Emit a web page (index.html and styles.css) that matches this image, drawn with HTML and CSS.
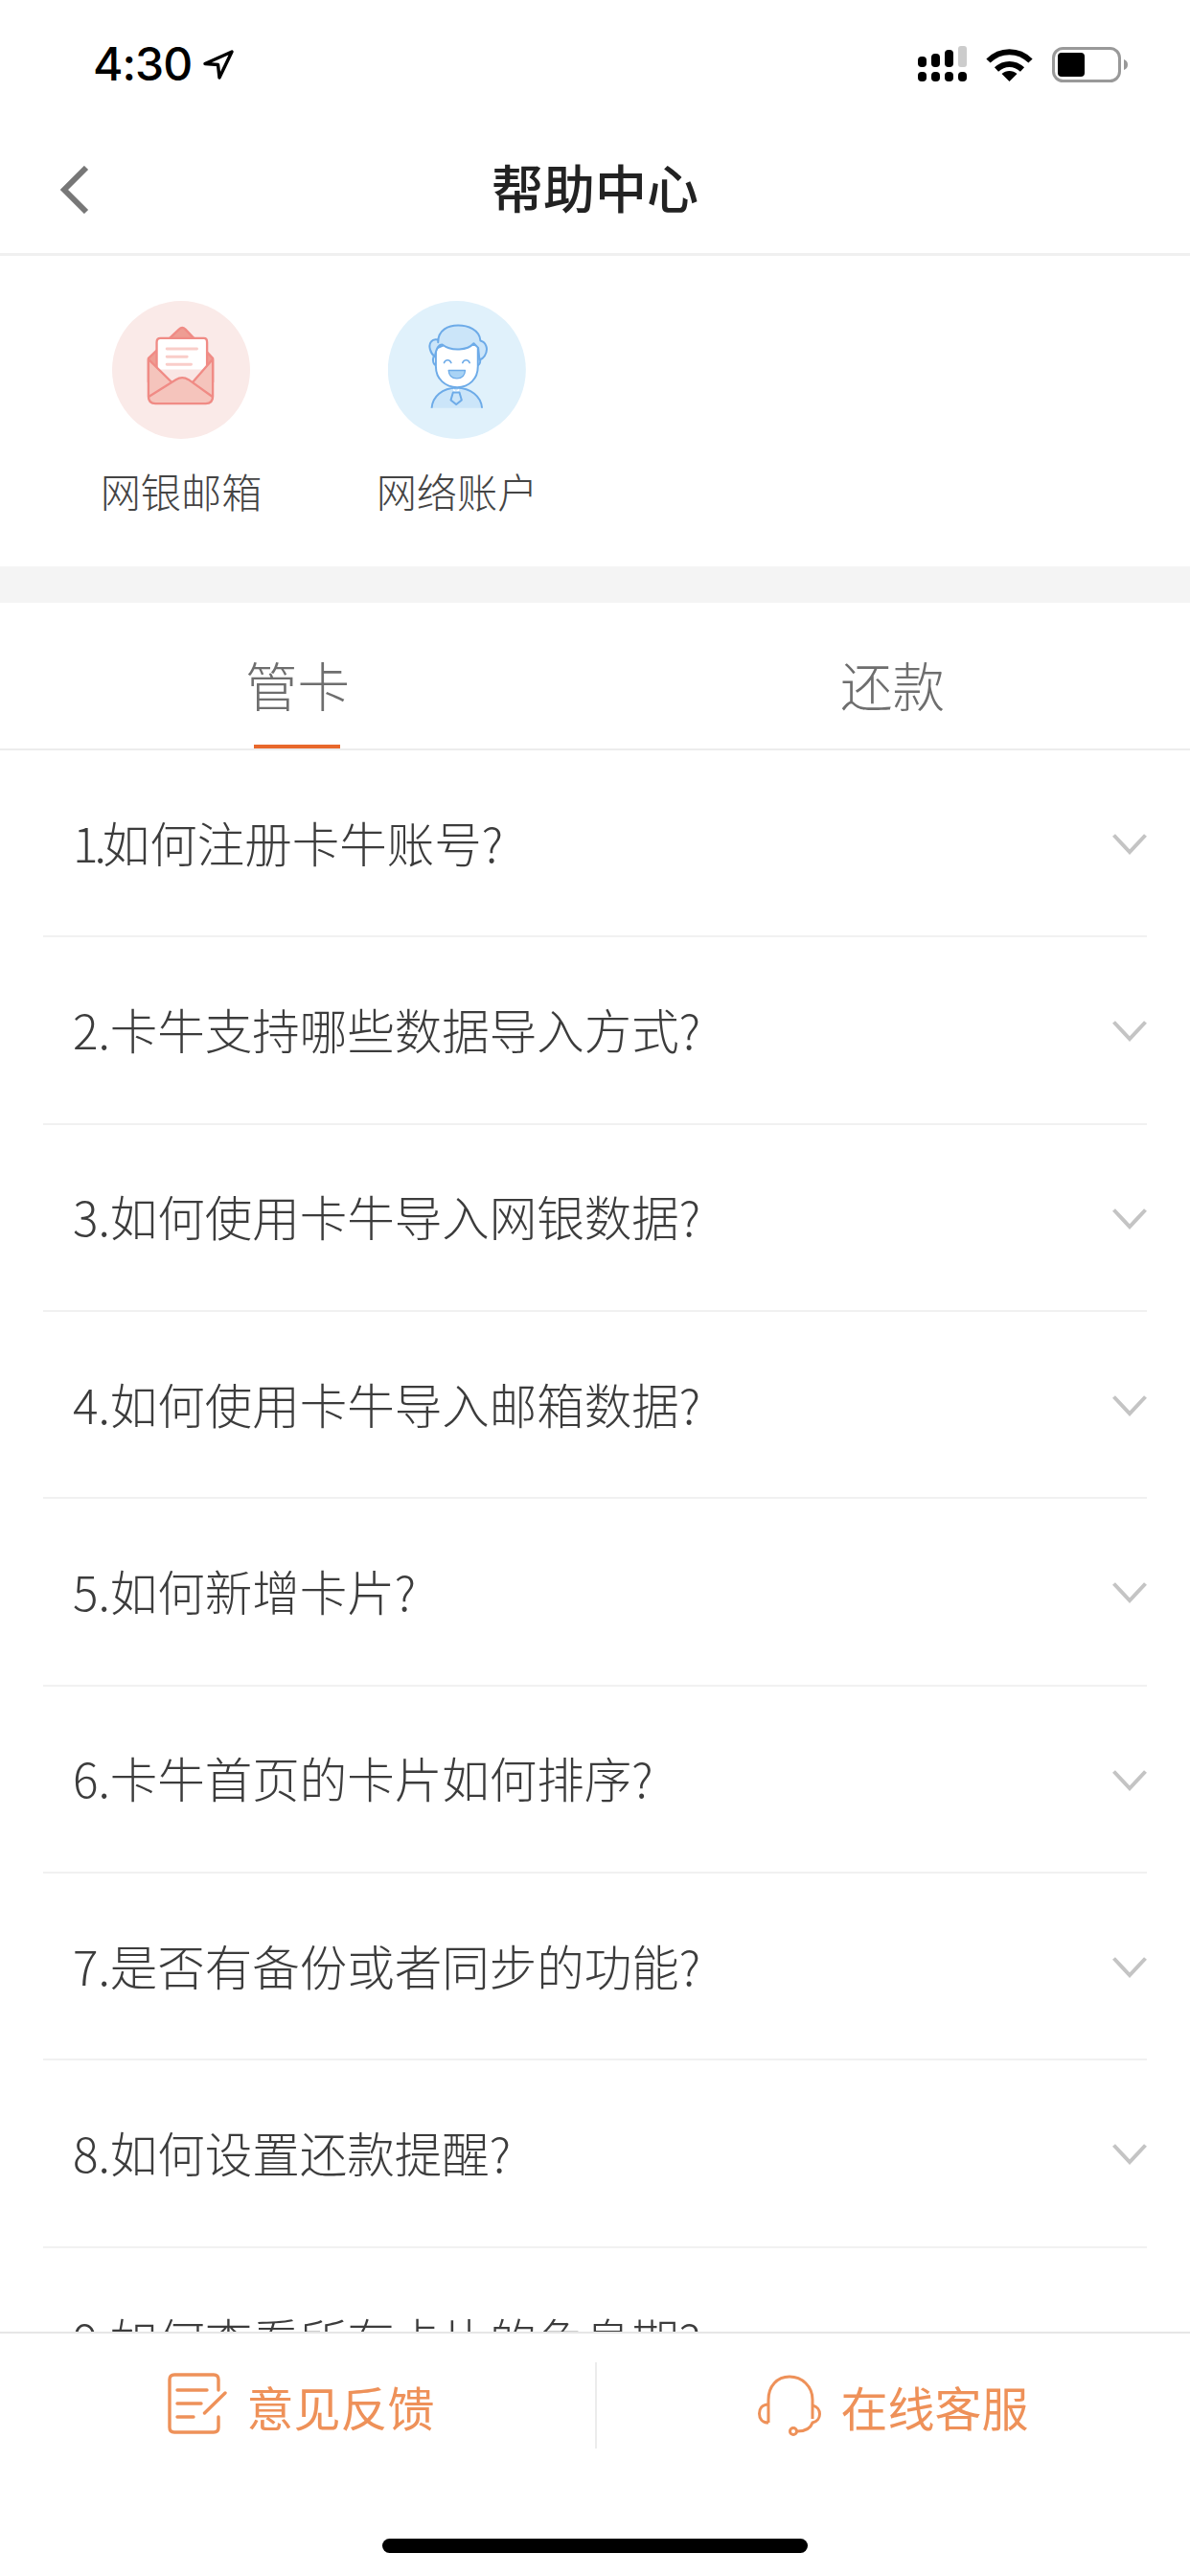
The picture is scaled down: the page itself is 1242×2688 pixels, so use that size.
FILE: index.html
```html
<!DOCTYPE html>
<html lang="zh-CN">
<head>
<meta charset="utf-8">
<title>帮助中心</title>
<link rel="stylesheet" href="styles.css">
</head>
<body>
<div class="page">
  <div class="status">
    <div class="status-left">
      <span class="time">4:30</span>
      <svg class="loc" viewBox="0 0 32 31"><path d="M2 14.500 30 2 17 29 15.500 15.500Z" fill="none" stroke="#000" stroke-width="3.400" stroke-linejoin="round"/></svg>
    </div>
    <div class="status-right">
      <svg class="signal" viewBox="0 0 51 37">
        <rect x="0" y="11" width="9" height="11" rx="4"/><rect x="14" y="8" width="9" height="14" rx="4"/><rect x="28" y="4" width="9" height="18" rx="4"/><rect x="42" y="0" width="9" height="22" rx="3" fill="#ccc"/>
        <rect x="0" y="27" width="9" height="10" rx="4"/><rect x="14" y="27" width="9" height="10" rx="4"/><rect x="28" y="27" width="9" height="10" rx="4"/><rect x="42" y="27" width="9" height="10" rx="4"/>
      </svg>
      <svg class="wifi" viewBox="0 0 49 36">
        <path d="M2.500 14.500C15 2 34 2 46.500 14.500" fill="none" stroke="#000" stroke-width="6"/>
        <path d="M11 23.500C19 16 30 16 38 23.500" fill="none" stroke="#000" stroke-width="6"/>
        <path d="M24.500 36 16.500 28C21 24 28 24 32.500 28Z"/>
      </svg>
      <svg class="battery" viewBox="0 0 79 37">
        <rect x="1.500" y="1.500" width="69" height="34" rx="10" fill="none" stroke="#999" stroke-width="3"/>
        <rect x="6" y="6" width="28" height="25" rx="4"/>
        <path d="M75 13C78 14 79 16 79 18.500S78 23 75 24Z" fill="#999"/>
      </svg>
    </div>
  </div>

  <header class="nav">
    <svg class="back" viewBox="0 0 30 50"><path d="M27 2 4 25 27 48" fill="none" stroke="#777" stroke-width="6"/></svg>
    <h1 class="title">帮助中心</h1>
  </header>

  <section class="shortcuts">
    <div class="shortcut">
      <svg class="shortcut-icon" viewBox="110 75 433 433">
        <circle cx="326.500" cy="291.500" r="216.500" fill="#faeae8"/>
        <path d="M224 255 320 164Q330 154 340 164L426 255V330H224Z" fill="#ee9d93" stroke="#f08b85" stroke-width="7" stroke-linejoin="round"/>
        <path d="M250 205Q250 192 262 192H398Q408 192 408 205V340H250Z" fill="#fff" stroke="#f08b85" stroke-width="7"/>
        <path d="M250 290V322L300 350H360L408 318V290" fill="#f9e6e4"/>
        <path d="M282 225H376M282 250H345M282 274H358" stroke="#f9cdc9" stroke-width="9" stroke-linecap="round" fill="none"/>
        <path d="M224 258 312 345H350L426 258V375Q426 397 404 397H246Q224 397 224 375Z" fill="#f5c4bc" stroke="#f08b85" stroke-width="7" stroke-linejoin="round"/>
        <path d="M226 375 310 322Q330 310 350 322L424 375" fill="#f5c4bc"/>
        <path d="M226 375 310 322Q330 310 350 322L424 375" fill="none" stroke="#f08b85" stroke-width="7" stroke-linecap="round"/>
      </svg>
      <span class="shortcut-label">网银邮箱</span>
    </div>
    <div class="shortcut">
      <svg class="shortcut-icon" viewBox="105 75 433 433">
        <circle cx="321" cy="291.500" r="216.500" fill="#e0f1fb"/>
        <path d="M242 411C245 375 275 348 320 348S397 375 400 411Z" fill="#cbe5f9"/>
        <path d="M242 411C245 375 275 348 320 348S397 375 400 411" fill="none" stroke="#6dabe8" stroke-width="6"/>
        <path d="M310 350 318 358 328 350 328 358 318 366 310 358Z" fill="#fff"/>
        <path d="M309 362H329L336 386 319 400 302 386Z" fill="#cbe5f9" stroke="#6dabe8" stroke-width="6" stroke-linejoin="round"/>
        <path d="M248 250C243 262 248 276 256 277M392 250C398 262 393 276 386 277" fill="#fff" stroke="#6dabe8" stroke-width="6"/>
        <path d="M255 225V280C255 320 285 346 322 346S387 320 387 280V215L300 205Z" fill="#fff" stroke="#6dabe8" stroke-width="6"/>
        <path d="M262 205C262 165 295 152 325 152S392 165 395 200C412 205 422 225 408 248 403 256 398 258 392 260L388 222 374 208C355 230 305 235 275 212 262 212 255 230 252 250 238 240 230 215 240 203 246 195 255 195 262 197Z" fill="#cbe5f9" stroke="#6dabe8" stroke-width="6" stroke-linejoin="round"/>
        <path d="M281 269C286 258 298 258 303 269M339 269C344 258 356 258 361 269" fill="none" stroke="#6dabe8" stroke-width="5" stroke-linecap="round"/>
        <path d="M295 293H347C346 310 335 318 321 318S296 310 295 293Z" fill="#a9d3f5" stroke="#6dabe8" stroke-width="4" stroke-linejoin="round"/>
      </svg>
      <span class="shortcut-label">网络账户</span>
    </div>
  </section>

  <div class="band"></div>

  <nav class="tabs">
    <div class="tab tab-active">管卡</div>
    <div class="tab">还款</div>
  </nav>

  <div class="faq">
    <div class="faq-row"><span><span class="narrow-digit">1.</span>如何注册卡牛账号?</span><svg class="chev" viewBox="0 0 36 22"><path d="M1.500 1.500 18 19 34.500 1.500" fill="none" stroke="#c4c4c4" stroke-width="4"/></svg></div>
    <div class="faq-row"><span>2.卡牛支持哪些数据导入方式?</span><svg class="chev" viewBox="0 0 36 22"><path d="M1.500 1.500 18 19 34.500 1.500" fill="none" stroke="#c4c4c4" stroke-width="4"/></svg></div>
    <div class="faq-row"><span>3.如何使用卡牛导入网银数据?</span><svg class="chev" viewBox="0 0 36 22"><path d="M1.500 1.500 18 19 34.500 1.500" fill="none" stroke="#c4c4c4" stroke-width="4"/></svg></div>
    <div class="faq-row"><span>4.如何使用卡牛导入邮箱数据?</span><svg class="chev" viewBox="0 0 36 22"><path d="M1.500 1.500 18 19 34.500 1.500" fill="none" stroke="#c4c4c4" stroke-width="4"/></svg></div>
    <div class="faq-row"><span>5.如何新增卡片?</span><svg class="chev" viewBox="0 0 36 22"><path d="M1.500 1.500 18 19 34.500 1.500" fill="none" stroke="#c4c4c4" stroke-width="4"/></svg></div>
    <div class="faq-row"><span>6.卡牛首页的卡片如何排序?</span><svg class="chev" viewBox="0 0 36 22"><path d="M1.500 1.500 18 19 34.500 1.500" fill="none" stroke="#c4c4c4" stroke-width="4"/></svg></div>
    <div class="faq-row"><span>7.是否有备份或者同步的功能?</span><svg class="chev" viewBox="0 0 36 22"><path d="M1.500 1.500 18 19 34.500 1.500" fill="none" stroke="#c4c4c4" stroke-width="4"/></svg></div>
    <div class="faq-row"><span>8.如何设置还款提醒?</span><svg class="chev" viewBox="0 0 36 22"><path d="M1.500 1.500 18 19 34.500 1.500" fill="none" stroke="#c4c4c4" stroke-width="4"/></svg></div>
    <div class="faq-row"><span>9.如何查看所有卡片的免息期?</span><svg class="chev" viewBox="0 0 36 22"><path d="M1.500 1.500 18 19 34.500 1.500" fill="none" stroke="#c4c4c4" stroke-width="4"/></svg></div>
  </div>

  <footer class="footer">
    <div class="actions">
      <div class="action action-left">
        <svg class="action-note" viewBox="0 0 62 64" fill="none" stroke="#ee9159" stroke-width="3.400" stroke-linecap="round">
          <path d="M53 18V7Q53 2 48 2H7Q2 2 2 7V57Q2 62 7 62H48Q53 62 53 57V46"/>
          <path d="M10 18H41M10 32H35M10 46H27M60 21 38.500 42"/>
        </svg>
        <span>意见反馈</span>
      </div>
      <div class="action action-right">
        <svg class="action-head" viewBox="0 0 66 64" fill="none" stroke="#ee9159" stroke-width="3">
          <path d="M11 50V26C11 12 20 2 33 2S57 12 57 26V46"/>
          <path d="M11 31C4 31 1.500 36 1.500 40.500S4 50 11 50"/>
          <path d="M57 32C62 33 64.500 37 64.500 41S62 49 57 50C55 56 49 59 41 59"/>
          <circle cx="37" cy="59" r="3.500"/>
        </svg>
        <span>在线客服</span>
      </div>
    </div>
    <div class="home-bar"></div>
  </footer>
</div>
</body>
</html>
```

FILE: styles.css
```css
* { box-sizing: border-box; }
html, body { margin: 0; padding: 0; background: #fff; }
body { font-family: "Noto Sans CJK SC", "Noto Sans", sans-serif; }

.page {
  width: 1242px;
  height: 2688px;
  display: flex;
  flex-direction: column;
  overflow: hidden;
  background: #fff;
}

/* status bar */
.status {
  height: 130px;
  flex: none;
  display: flex;
  justify-content: space-between;
  padding: 48px 65px 0 97px;
}
.status-left { display: flex; align-items: flex-start; gap: 12px; }
.time {
  font-family: Inter, "Liberation Sans", sans-serif;
  font-size: 48px;
  font-weight: 500;
  line-height: 38px;
  letter-spacing: -1px;
  color: #000;
}
.loc { width: 32px; height: 31px; margin-top: 4px; }
.status-right { display: flex; align-items: flex-start; }
.signal { width: 51px; height: 37px; }
.wifi { width: 49px; height: 36px; margin-left: 20px; margin-top: 1px; }
.battery { width: 79px; height: 37px; margin-left: 20px; margin-top: 1px; }

/* nav */
.nav {
  height: 137px;
  flex: none;
  display: flex;
  align-items: center;
  justify-content: center;
  border-bottom: 3px solid #f0f0f0;
  position: relative;
  padding-bottom: 5px;
}
.back { position: absolute; left: 63px; top: 43px; width: 30px; height: 50px; }
.title {
  margin: 0;
  font-size: 54px;
  font-weight: 500;
  line-height: 70px;
  color: #222;
}

/* shortcuts */
.shortcuts {
  height: 324px;
  flex: none;
  display: flex;
  padding: 47px 0 0 45px;
}
.shortcut {
  width: 288px;
  display: flex;
  flex-direction: column;
  align-items: center;
}
.shortcut-icon { width: 144px; height: 144px; display: block; }
.shortcut-label {
  margin-top: 26px;
  font-size: 42.200px;
  font-weight: 300;
  line-height: 56px;
  color: #444;
}

.band { height: 38px; flex: none; background: #f4f4f4; }

/* tabs */
.tabs {
  height: 154px;
  flex: none;
  display: flex;
  border-bottom: 2px solid #ececec;
}
.tab {
  flex: 1;
  display: flex;
  align-items: center;
  justify-content: center;
  padding-top: 16px;
  font-size: 54.500px;
  font-weight: 300;
  color: #6e6e6e;
  position: relative;
}
.tab-active::after {
  content: "";
  position: absolute;
  left: 265px;
  bottom: 0;
  width: 90px;
  height: 4px;
  background: #e8682c;
}

/* list */
.faq { flex: 1; min-height: 0; overflow: hidden; }
.faq-row {
  height: 195.330px;
  margin: 0 45px;
  padding: 0 0 3px 31px;
  display: flex;
  align-items: center;
  justify-content: space-between;
  border-bottom: 2px solid #f1f1f1;
  font-size: 49.500px;
  font-weight: 300;
  color: #3c3c3c;
}
.narrow-digit { letter-spacing: -4px; }
.chev { width: 36px; height: 22px; flex: none; margin-top: 6px; }

/* footer */
.footer {
  height: 255px;
  flex: none;
  display: flex;
  flex-direction: column;
  align-items: center;
  border-top: 2px solid #e6e6e6;
  background: #fff;
  padding-top: 30px;
}
.actions { width: 100%; height: 90px; display: flex; }
.action {
  width: 50%;
  flex: none;
  display: flex;
  align-items: center;
  justify-content: center;
  font-size: 49px;
  font-weight: 400;
  color: #ee9159;
}
.action-left { padding-left: 8px; gap: 20px; }
.action-right { border-left: 2px solid #ececec; gap: 20px; }
.action-note { width: 62px; height: 64px; margin-top: -5px; }
.action-head { width: 66px; height: 64px; }
.home-bar {
  width: 444px;
  height: 15px;
  margin-top: 94px;
  border-radius: 8px;
  background: #000;
}
```
